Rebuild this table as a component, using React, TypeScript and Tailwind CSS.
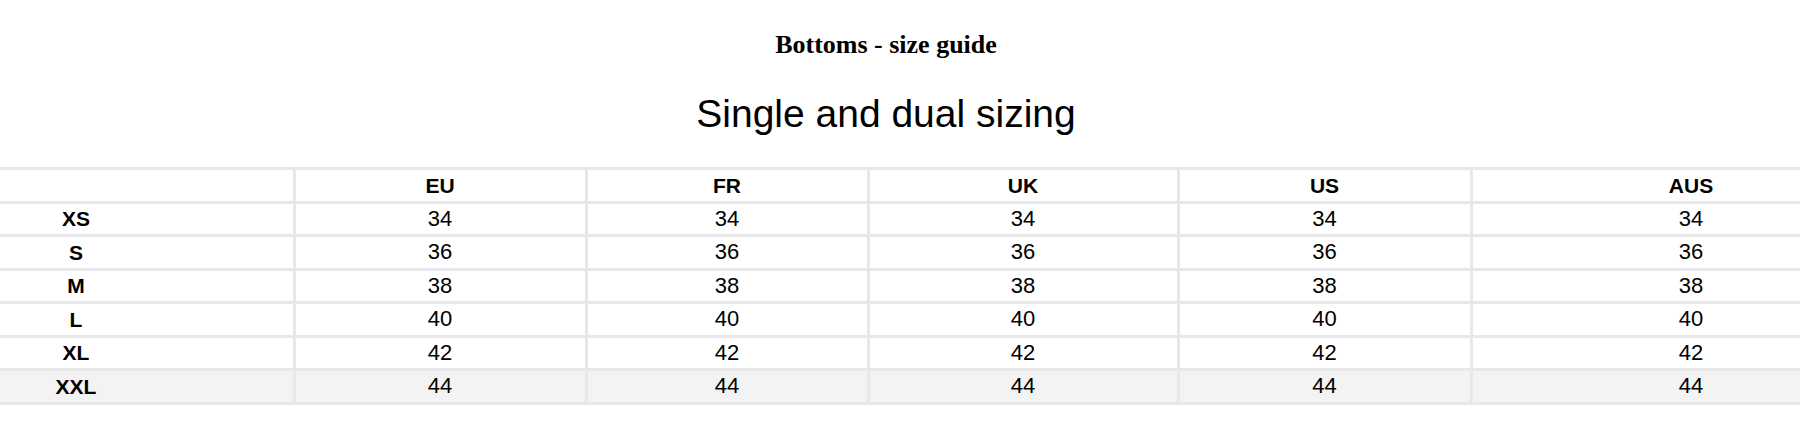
import React from "react";

const columns = ["", "EU", "FR", "UK", "US", "AUS"];

const rows: { label: string; value: string }[] = [
  { label: "XS", value: "34" },
  { label: "S", value: "36" },
  { label: "M", value: "38" },
  { label: "L", value: "40" },
  { label: "XL", value: "42" },
  { label: "XXL", value: "44" },
];

const App: React.FC = () => {
  return (
    <div className="w-full h-[444px] overflow-hidden bg-white text-black">
      <div className="w-[1772px] flex flex-col items-center">
        {/* Page heading */}
        <h2 className="mt-[30px] text-[26px] leading-[30px] font-bold font-['Liberation_Serif',serif]">
          Bottoms - size guide
        </h2>
        <h1 className="mt-[30px] text-[39px] leading-[48px] font-normal font-['Liberation_Sans',sans-serif]">
          Single and dual sizing
        </h1>

        {/* Size table, wider than the viewport on both sides */}
        <div className="mt-[29px] w-[2053px] shrink-0 grid grid-cols-[436px_292px_282px_310px_293px_440px] border-t-[3px] border-[#e8e8ea] font-['Liberation_Sans',sans-serif] text-[21px]">
          {columns.map((col, i) => (
            <div
              key={`h-${i}`}
              className="h-[30.5px] box-content flex items-center justify-center border-r-[3px] border-b-[3px] border-[#e8e8ea] font-bold leading-none"
            >
              {col}
            </div>
          ))}
          {rows.map((row, r) => {
            const last = r === rows.length - 1;
            return (
              <React.Fragment key={row.label}>
                <div
                  className={`h-[30.5px] box-content flex items-center justify-center border-r-[3px] border-b-[3px] border-[#e8e8ea] font-bold leading-none ${
                    last ? "bg-[#f3f3f3]" : "bg-white"
                  }`}
                >
                  {row.label}
                </div>
                {columns.slice(1).map((col) => (
                  <div
                    key={`${row.label}-${col}`}
                    className={`h-[30.5px] box-content flex items-center justify-center border-r-[3px] border-b-[3px] border-[#e8e8ea] leading-none text-[22px] ${
                      last ? "bg-[#f3f3f3]" : "bg-white"
                    }`}
                  >
                    {row.value}
                  </div>
                ))}
              </React.Fragment>
            );
          })}
        </div>
      </div>
    </div>
  );
};

export default App;
